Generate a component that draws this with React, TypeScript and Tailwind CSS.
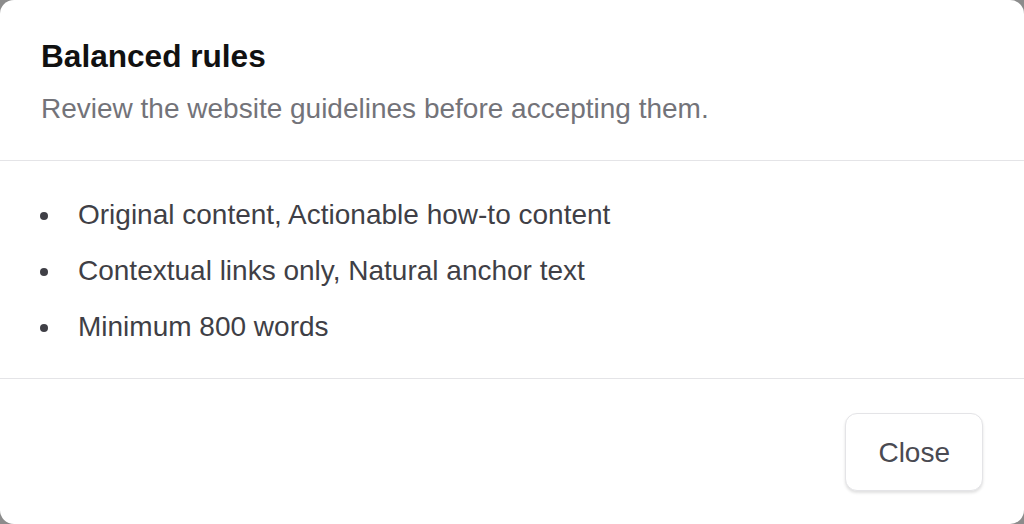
const rules = [
  'Original content, Actionable how-to content',
  'Contextual links only, Natural anchor text',
  'Minimum 800 words',
]

export default function App() {
  return (
    <div
      className="w-[1024px] h-[524px] bg-[#8c8c8c] overflow-hidden"
      style={{ fontFamily: '"Liberation Sans", Arial, sans-serif' }}
    >
      <div className="w-full h-full bg-white rounded-[14px] flex flex-col">
        {/* Header */}
        <div className="px-[41px] pt-[36px] pb-[30px] border-b border-[#e4e4e7]">
          <h2 className="text-[31.6px] leading-[40px] font-bold text-[#111111]">Balanced rules</h2>
          <p className="mt-[12px] text-[28px] leading-[42px] text-[#737379]">
            Review the website guidelines before accepting them.
          </p>
        </div>

        {/* Rules list */}
        <ul className="px-[40px] pt-[26px] pb-[23px] border-b border-[#e4e4e7]">
          {rules.map((rule) => (
            <li key={rule} className="flex items-center h-[56px] text-[28px] text-[#3f3f46]">
              <span className="w-[8px] h-[8px] rounded-full bg-[#3f3f46] mr-[30px] mt-[2px]" />
              {rule}
            </li>
          ))}
        </ul>

        {/* Footer */}
        <div className="flex justify-end px-[41px] pt-[34px]">
          <button className="px-[32px] pt-[18px] pb-[16px] text-[28px] leading-[42px] text-[#4a4a52] bg-white border border-[#e4e4e7] rounded-[12px] shadow-[0_2px_3px_rgba(0,0,0,0.12)]">
            Close
          </button>
        </div>
      </div>
    </div>
  )
}
